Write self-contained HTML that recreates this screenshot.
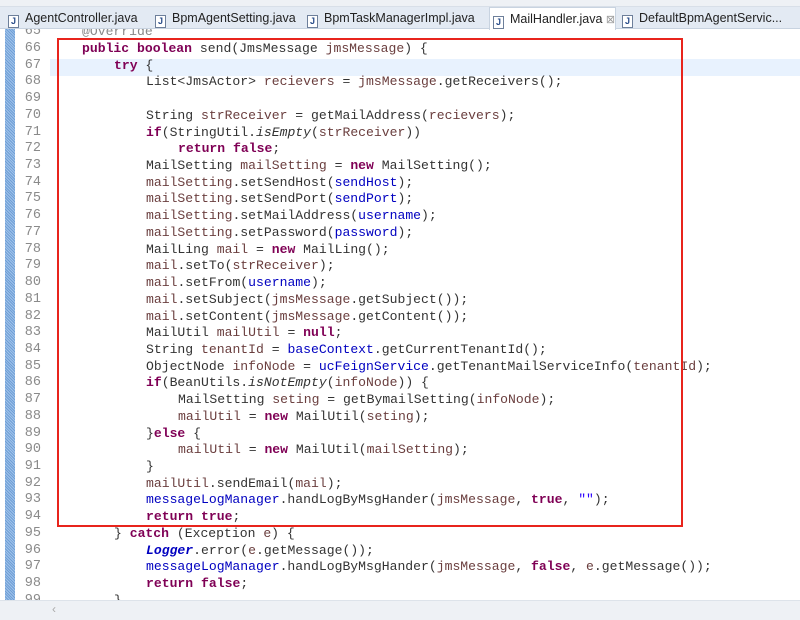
<!DOCTYPE html>
<html><head><style>
*{margin:0;padding:0;box-sizing:border-box}
body{width:800px;height:620px;overflow:hidden;background:#fff;font-family:"Liberation Sans",sans-serif;position:relative}
#top{position:absolute;left:0;top:0;width:800px;height:6px;background:#eef1f5}
#tabs{position:absolute;left:0;top:6px;width:800px;height:23px;background:#e3eaf3;border-bottom:1px solid #c8d3e0;border-top:1px solid #d8dfe8}
.tab{position:absolute;top:2px;height:20px;font-size:12.5px;color:#222;line-height:18px;white-space:nowrap}
.ic{display:inline-block;width:11px;height:13px;border:1px solid #6d7f9a;background:#fff;font-size:9px;line-height:11px;text-align:center;color:#2a4d8a;vertical-align:-2px;margin-right:6px;font-weight:bold}
.active{background:#fff;border:1px solid #c8d3e0;border-bottom:none;top:0;height:23px;padding-top:2px}
#ruler{position:absolute;left:5px;top:29px;width:10px;height:571px;background:repeating-linear-gradient(45deg,#6f9fd6 0 1px,#9fc2ea 1px 2px)}
.ln{position:absolute;left:15px;width:26px;text-align:right;font-family:"Liberation Mono",monospace;font-size:13.5px;color:#8a8a8a}
.cl{position:absolute;left:0;white-space:pre;font-family:"Liberation Mono",monospace;font-size:13.1px;color:#333}
.k{color:#7f0055;font-weight:bold}.v{color:#6a3e3e}.f{color:#0000c0}.i{font-style:italic}.s{color:#2a00ff}
#hl{position:absolute;left:50px;top:59px;width:750px;height:17px;background:#e8f2fe}
#box{position:absolute;left:57px;top:38px;width:626px;height:489px;border:2px solid #e8241c}
#sb{position:absolute;left:0;top:600px;width:800px;height:20px;background:#eef1f5;border-top:1px solid #dde3ea}
</style></head><body>
<div id="top"></div>
<div id="hl"></div>
<div id="ruler"></div>
<div id="code"></div>
<div id="tabs">
<div class="tab" style="left:8px"><span class="ic">J</span>AgentController.java</div>
<div class="tab" style="left:155px"><span class="ic">J</span>BpmAgentSetting.java</div>
<div class="tab" style="left:307px"><span class="ic">J</span>BpmTaskManagerImpl.java</div>
<div class="tab active" style="left:489px;width:127px;padding-left:3px"><span class="ic">J</span>MailHandler.java <span style="color:#999;font-size:11px">⊠</span></div>
<div class="tab" style="left:622px"><span class="ic">J</span>DefaultBpmAgentServic...</div>
</div>
<div id="box"></div>
<div id="sb"><span style="position:absolute;left:52px;top:1px;color:#aaa;font-size:12px">‹</span></div>
<script>
const L=[
[65,1,'<span style="color:#888">@Override</span>'],
[66,1,'<span class="k">public</span> <span class="k">boolean</span> send(JmsMessage <span class="v">jmsMessage</span>) {'],
[67,2,'<span class="k">try</span> {'],
[68,3,'List&lt;JmsActor&gt; <span class="v">recievers</span> = <span class="v">jmsMessage</span>.getReceivers();'],
[69,3,''],
[70,3,'String <span class="v">strReceiver</span> = getMailAddress(<span class="v">recievers</span>);'],
[71,3,'<span class="k">if</span>(StringUtil.<span class="i">isEmpty</span>(<span class="v">strReceiver</span>))'],
[72,4,'<span class="k">return</span> <span class="k">false</span>;'],
[73,3,'MailSetting <span class="v">mailSetting</span> = <span class="k">new</span> MailSetting();'],
[74,3,'<span class="v">mailSetting</span>.setSendHost(<span class="f">sendHost</span>);'],
[75,3,'<span class="v">mailSetting</span>.setSendPort(<span class="f">sendPort</span>);'],
[76,3,'<span class="v">mailSetting</span>.setMailAddress(<span class="f">username</span>);'],
[77,3,'<span class="v">mailSetting</span>.setPassword(<span class="f">password</span>);'],
[78,3,'MailLing <span class="v">mail</span> = <span class="k">new</span> MailLing();'],
[79,3,'<span class="v">mail</span>.setTo(<span class="v">strReceiver</span>);'],
[80,3,'<span class="v">mail</span>.setFrom(<span class="f">username</span>);'],
[81,3,'<span class="v">mail</span>.setSubject(<span class="v">jmsMessage</span>.getSubject());'],
[82,3,'<span class="v">mail</span>.setContent(<span class="v">jmsMessage</span>.getContent());'],
[83,3,'MailUtil <span class="v">mailUtil</span> = <span class="k">null</span>;'],
[84,3,'String <span class="v">tenantId</span> = <span class="f">baseContext</span>.getCurrentTenantId();'],
[85,3,'ObjectNode <span class="v">infoNode</span> = <span class="f">ucFeignService</span>.getTenantMailServiceInfo(<span class="v">tenantId</span>);'],
[86,3,'<span class="k">if</span>(BeanUtils.<span class="i">isNotEmpty</span>(<span class="v">infoNode</span>)) {'],
[87,4,'MailSetting <span class="v">seting</span> = getBymailSetting(<span class="v">infoNode</span>);'],
[88,4,'<span class="v">mailUtil</span> = <span class="k">new</span> MailUtil(<span class="v">seting</span>);'],
[89,3,'}<span class="k">else</span> {'],
[90,4,'<span class="v">mailUtil</span> = <span class="k">new</span> MailUtil(<span class="v">mailSetting</span>);'],
[91,3,'}'],
[92,3,'<span class="v">mailUtil</span>.sendEmail(<span class="v">mail</span>);'],
[93,3,'<span class="f">messageLogManager</span>.handLogByMsgHander(<span class="v">jmsMessage</span>, <span class="k">true</span>, <span class="s">""</span>);'],
[94,3,'<span class="k">return</span> <span class="k">true</span>;'],
[95,2,'} <span class="k">catch</span> (Exception <span class="v">e</span>) {'],
[96,3,'<span class="f i" style="font-weight:bold">Logger</span>.error(<span class="v">e</span>.getMessage());'],
[97,3,'<span class="f">messageLogManager</span>.handLogByMsgHander(<span class="v">jmsMessage</span>, <span class="k">false</span>, <span class="v">e</span>.getMessage());'],
[98,3,'<span class="k">return</span> <span class="k">false</span>;'],
[99,2,'}']];
let h='';
L.forEach(([n,ind,t])=>{const y=50+(n-66)*16.72-9;
h+=`<div class="ln" style="top:${y}px">${n}</div><div class="cl" style="left:${82+(ind-1)*32}px;top:${y}px">${t}</div>`;});
document.getElementById('code').innerHTML=h;
</script>
</body></html>
